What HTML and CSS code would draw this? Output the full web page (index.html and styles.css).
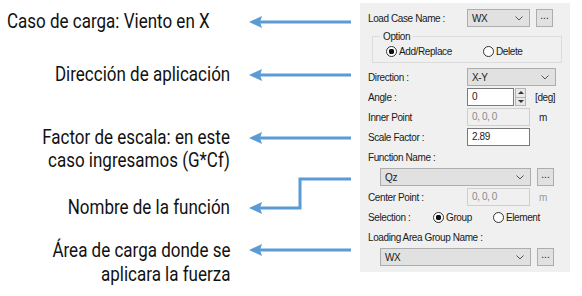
FILE: index.html
```html
<!DOCTYPE html>
<html>
<head>
  <title>Wind Load Notes</title>
  <link rel="stylesheet" href="styles.css">
</head>
<body>
  <div class="sheet">
    <div class="notes">
      <svg class="arrows" width="360" height="296" viewBox="0 0 360 296">
        <g fill="none" stroke="#5b9bd5" stroke-width="3">
          <path d="M258 22 H351"/>
          <path d="M258 75 H351"/>
          <path d="M258 138 H351"/>
          <path d="M258 208 H300 V179 H351"/>
          <path d="M258 250 H351"/>
        </g>
        <g fill="#5b9bd5">
          <path d="M249 22 L262 16 L260 22 L262 28 Z"/>
          <path d="M249 75 L262 69 L260 75 L262 81 Z"/>
          <path d="M249 138 L262 132 L260 138 L262 144 Z"/>
          <path d="M249 208 L262 202 L260 208 L262 214 Z"/>
          <path d="M249 250 L262 244 L260 250 L262 256 Z"/>
        </g>
      </svg>
      <p class="note note-case">Caso de carga: Viento en X</p>
      <p class="note note-dir">Dirección de aplicación</p>
      <p class="note note-scale">Factor de escala: en este<br>caso ingresamos (G*Cf)</p>
      <p class="note note-func">Nombre de la función</p>
      <p class="note note-area">Área de carga donde se<br>aplicara la fuerza</p>
    </div>

    <div class="panel">
      <div class="row">
        <span class="label">Load Case Name :</span>
        <div class="combo combo-short"><span>WX</span><svg class="chev" width="8" height="5" viewBox="0 0 8 5"><path d="M0.5 0.5 L4 4 L7.5 0.5"/></svg></div>
        <div class="dots">...</div>
      </div>

      <fieldset class="group">
        <legend>Option</legend>
        <div class="radios">
          <span class="radio on">Add/Replace</span>
          <span class="radio">Delete</span>
        </div>
      </fieldset>

      <div class="row">
        <span class="label">Direction :</span>
        <div class="combo combo-wide"><span>X-Y</span><svg class="chev" width="8" height="5" viewBox="0 0 8 5"><path d="M0.5 0.5 L4 4 L7.5 0.5"/></svg></div>
      </div>

      <div class="row">
        <span class="label">Angle :</span>
        <div class="field field-angle">0</div>
        <div class="spin"><span class="up"></span><span class="down"></span></div>
        <span class="unit">[deg]</span>
      </div>

      <div class="row">
        <span class="label">Inner Point</span>
        <div class="field off">0, 0, 0</div>
        <span class="unit">m</span>
      </div>

      <div class="row">
        <span class="label">Scale Factor :</span>
        <div class="field">2.89</div>
      </div>

      <div class="row">
        <span class="label">Function Name :</span>
      </div>

      <div class="row row-indent">
        <div class="combo combo-long"><span>Qz</span><svg class="chev" width="8" height="5" viewBox="0 0 8 5"><path d="M0.5 0.5 L4 4 L7.5 0.5"/></svg></div>
        <div class="dots">...</div>
      </div>

      <div class="row">
        <span class="label">Center Point :</span>
        <div class="field off">0, 0, 0</div>
        <span class="unit muted">m</span>
      </div>

      <div class="row">
        <span class="label label-sel">Selection :</span>
        <span class="radio on radio-group">Group</span>
        <span class="radio">Element</span>
      </div>

      <div class="row">
        <span class="label">Loading Area Group Name :</span>
      </div>

      <div class="row row-indent">
        <div class="combo combo-long"><span>WX</span><svg class="chev" width="8" height="5" viewBox="0 0 8 5"><path d="M0.5 0.5 L4 4 L7.5 0.5"/></svg></div>
        <div class="dots">...</div>
      </div>
    </div>
  </div>
</body>
</html>
```

FILE: styles.css
```css
:root {
  --panel: #f0f0f0;
  --edge: #adadad;
  --button: #e1e1e1;
  --arrow: #5b9bd5;
  --text: #1a1a1a;
}

* {
  margin: 0;
  padding: 0;
  box-sizing: border-box;
}

body {
  background: #fff;
  width: 582px;
  height: 296px;
  overflow: hidden;
}

.sheet {
  display: flex;
  align-items: flex-start;
}

/* annotation side */

.notes {
  position: relative;
  width: 360px;
  height: 296px;
  flex: none;
}

.arrows {
  position: absolute;
  left: 0;
  top: 0;
}

.note {
  position: absolute;
  right: 130px;
  font-family: Roboto, "Liberation Sans", sans-serif;
  font-size: 20px;
  line-height: 23px;
  color: #111;
  text-align: right;
  white-space: nowrap;
  transform: scaleX(0.85);
  transform-origin: right center;
}

.note-case { top: 10px; left: 7px; right: auto; text-align: left; transform-origin: left center; }
.note-dir { top: 63px; }
.note-scale { top: 126px; }
.note-func { top: 196px; }
.note-area { top: 238px; line-height: 24px; }

/* dialog side */

.panel {
  width: 210px;
  margin-top: 3px;
  height: 269px;
  background: var(--panel);
  padding: 5px 0 0 8px;
  font-family: Tahoma, "Liberation Sans", sans-serif;
  font-size: 10px;
  letter-spacing: -0.4px;
  color: var(--text);
}

.row {
  display: flex;
  align-items: center;
  height: 20px;
}

.row-indent {
  padding-left: 12px;
}

.label {
  width: 99px;
  flex: none;
  white-space: nowrap;
}

.label-sel {
  width: 65px;
}

.combo {
  display: flex;
  align-items: center;
  justify-content: space-between;
  height: 18px;
  background: var(--button);
  border: 1px solid var(--edge);
  padding: 0 6px 0 4px;
}

.combo-short { width: 63px; }
.combo-wide { width: 89px; }
.combo-long { width: 151px; }

.chev {
  fill: none;
  stroke: #555;
  stroke-width: 1;
}

.dots {
  margin-left: 6px;
  width: 17px;
  height: 18px;
  background: var(--button);
  border: 1px solid var(--edge);
  text-align: center;
  line-height: 12px;
  letter-spacing: 0;
}

.group {
  margin: 3px 8px 4px 4px;
  height: 32px;
  border: 1px solid #dcdcdc;
  padding: 0;
}

.group legend {
  margin-left: 7px;
  padding: 0 3px;
  line-height: 11px;
}

.radios {
  display: flex;
  padding: 4px 0 0 13px;
}

.radios .radio:first-child {
  width: 97px;
}

.radio {
  display: inline-flex;
  align-items: center;
  gap: 2px;
}

.radio-group {
  width: 60px;
}

.radio::before {
  content: "";
  width: 11px;
  height: 11px;
  border: 1px solid #333;
  border-radius: 50%;
  background: #fff;
  box-sizing: border-box;
}

.radio.on::before {
  background: radial-gradient(circle, #111 0 2.6px, #fff 3px);
}

.field {
  width: 63px;
  height: 18px;
  background: #fff;
  border: 1px solid #7a7a7a;
  padding: 0 4px;
  line-height: 16px;
}

.field-angle {
  width: 47px;
}

.field.off {
  background: var(--panel);
  border-color: #cfcfcf;
  color: #8a8a8a;
}

.spin {
  width: 11px;
  height: 18px;
  margin-left: 1px;
  display: flex;
  flex-direction: column;
  border: 1px solid #b5b5b5;
  background: #e8e8e8;
}

.spin span {
  flex: 1;
  display: flex;
  align-items: center;
  justify-content: center;
}

.spin .up::after,
.spin .down::after {
  content: "";
  border-left: 3px solid transparent;
  border-right: 3px solid transparent;
}

.spin .up { border-bottom: 1px solid #b5b5b5; }
.spin .up::after { border-bottom: 3px solid #333; }
.spin .down::after { border-top: 3px solid #333; }

.unit {
  margin-left: 9px;
}

.unit.muted {
  color: #9a9a9a;
}
```
